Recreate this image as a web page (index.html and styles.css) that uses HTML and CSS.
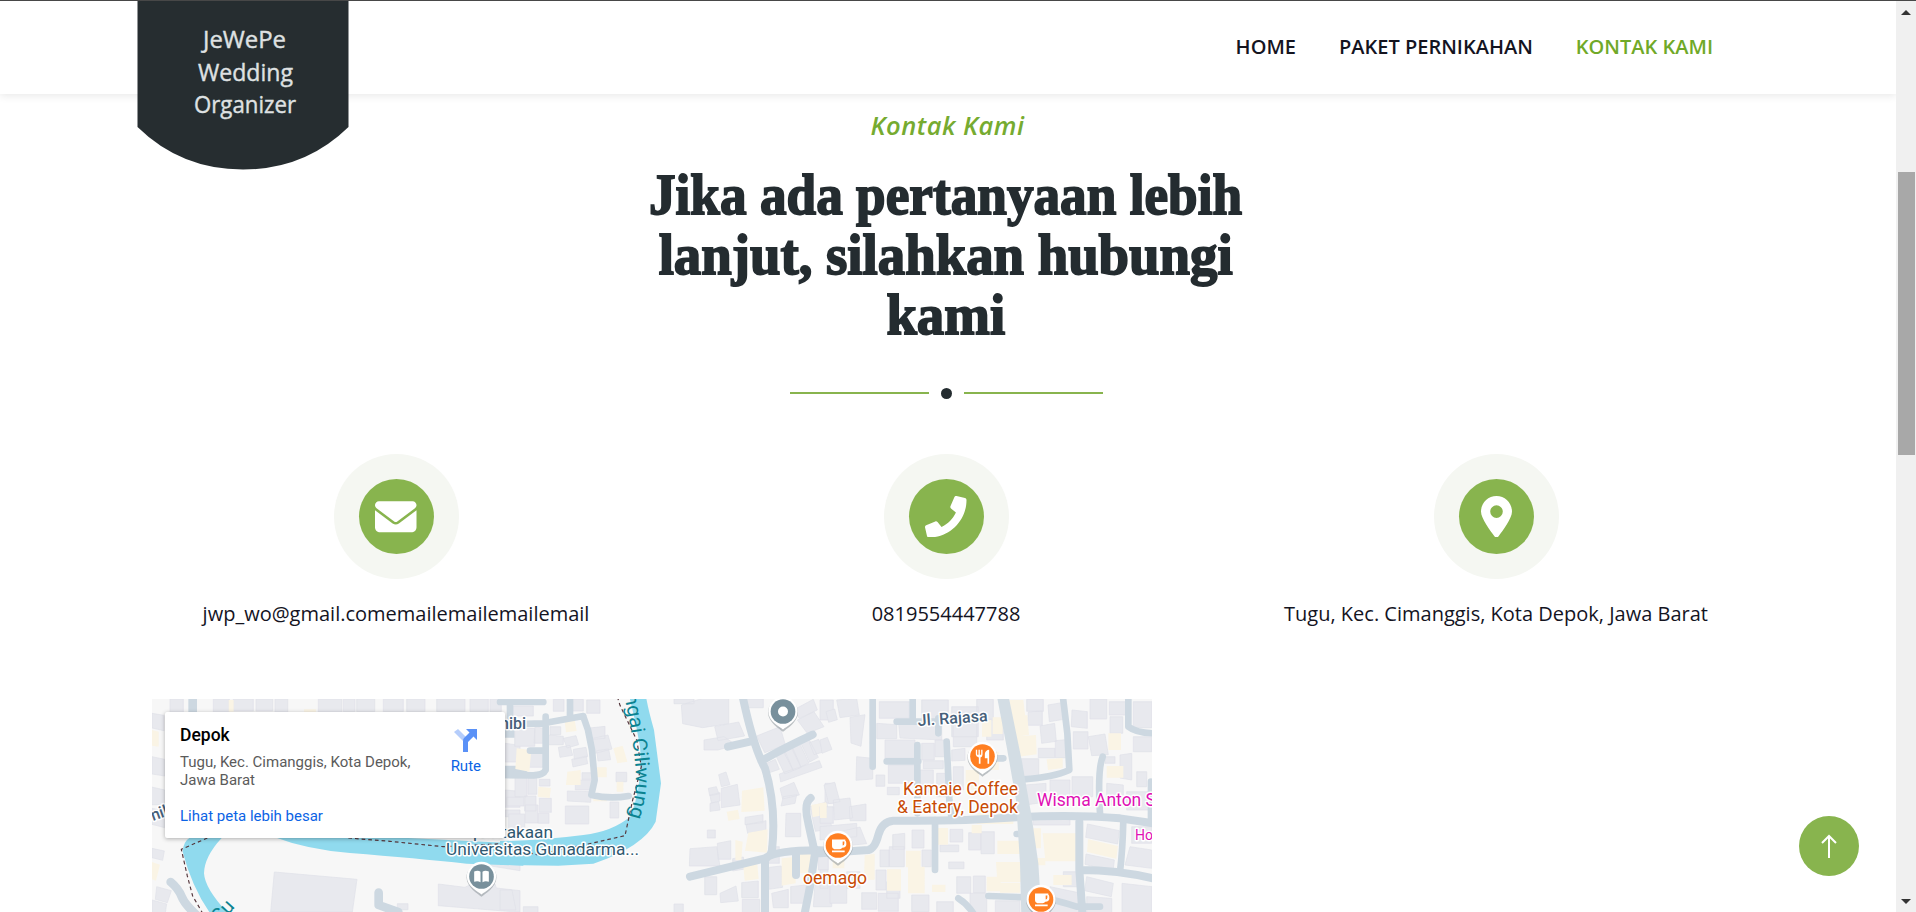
FILE: index.html
```html
<!DOCTYPE html>
<html lang="id">
<head>
<meta charset="utf-8">
<title>JeWePe Wedding Organizer</title>
<link rel="stylesheet" href="styles.css">
</head>
<body>
<div class="page">
  <header class="header">
    <a class="logo">
      <svg width="212" height="170" viewBox="0 0 212 170">
        <path d="M.5 0H211.500V127Q168 169.500 106 169.500T.5 127Z" fill="#262d30"/>
        <g class="logo-text">
          <text x="66" y="48" textLength="83" lengthAdjust="spacingAndGlyphs">JeWePe</text>
          <text x="61" y="81" textLength="95" lengthAdjust="spacingAndGlyphs">Wedding</text>
          <text x="57" y="113" textLength="102" lengthAdjust="spacingAndGlyphs">Organizer</text>
        </g>
      </svg>
    </a>
    <nav class="nav">
      <a>HOME</a>
      <a>PAKET PERNIKAHAN</a>
      <a class="active">KONTAK KAMI</a>
    </nav>
  </header>

  <main class="contact">
    <p class="eyebrow">Kontak Kami</p>
    <h1 class="title"><span class="l1">Jika ada pertanyaan lebih</span><span class="l2">lanjut, silahkan hubungi</span><span class="l3">kami</span></h1>
    <div class="divider"><i class="line"></i><i class="dot"></i><i class="line"></i></div>

    <div class="cards">
      <div class="card">
        <div class="ring"><div class="disc"><svg width="41.500" height="41.500" viewBox="0 0 512 512"><path d="M48 64C21.500 64 0 85.500 0 112c0 15.100 7.100 29.300 19.200 38.400L236.800 313.600c11.400 8.500 27 8.500 38.400 0L492.800 150.400c12.100-9.100 19.200-23.300 19.200-38.400c0-26.500-21.500-48-48-48H48zM0 176V384c0 35.300 28.700 64 64 64H448c35.300 0 64-28.700 64-64V176L294.400 339.200c-22.800 17.100-54 17.100-76.800 0L0 176z"/></svg></div></div>
        <p>jwp_wo@gmail.comemailemailemailemail</p>
      </div>
      <div class="card">
        <div class="ring"><div class="disc"><svg width="41.500" height="41.500" viewBox="0 0 512 512"><path d="M493.400 24.600l-104-24c-11.300-2.600-22.900 3.300-27.500 13.900l-48 112c-4.200 9.800-1.400 21.300 6.900 28l60.600 49.600c-36 76.700-98.900 140.500-177.200 177.200l-49.600-60.600c-6.800-8.300-18.200-11.100-28-6.900l-112 48C3.900 366.500-2 378.100.6 389.400l24 104C27.100 504.200 36.700 512 48 512c256.100 0 464-207.500 464-464 0-11.200-7.700-20.900-18.600-23.400z"/></svg></div></div>
        <p>0819554447788</p>
      </div>
      <div class="card">
        <div class="ring"><div class="disc"><svg width="31" height="41.500" viewBox="0 0 384 512"><path fill-rule="evenodd" d="M215.700 499.200C267 435 384 279.400 384 192C384 86 298 0 192 0S0 86 0 192c0 87.400 117 243 168.300 307.200c12.300 15.300 35.100 15.300 47.400 0zM192 114a78 78 0 1 1 0 156 78 78 0 1 1 0-156z"/></svg></div></div>
        <p>Tugu, Kec. Cimanggis, Kota Depok, Jawa Barat</p>
      </div>
    </div>

    <div class="map">
      <svg class="map-canvas" width="1000" height="213" viewBox="152 699 1000 213">
        <defs>
          <g id="pin"><path d="M0 58C-9 50-45 30-45 0A45 45 0 1 1 45 0C45 30 9 50 0 58Z" fill="#8b9399" opacity=".55" transform="translate(0 3)"/><path d="M0 54C-9 46-44 30-44 0A44 44 0 1 1 44 0C44 30 9 46 0 54Z" fill="#fff"/></g>
          <g id="cup"><use href="#pin"/><circle r="37" fill="#ff7f22"/><path d="M-18-18H22V-14Q25-14 25-3Q25 6 13 7Q10 11 5 11H-11Q-18 10-18 2ZM14-12V0Q19 0 19-6V-12ZM-18 15H20V20H-18Z" fill="#fff" fill-rule="evenodd"/></g>
        </defs>
        <rect x="152" y="699" width="1000" height="213" fill="#f7f7f7"/>

        <!-- west: river bend and campus -->
        <g transform="translate(150 690) scale(.33333)">
          <g class="building">
            <path d="M60 27h40v40h-40zM190 27h48v40h-48zM250 27h60v36h-60zM318 27h50v36h-50zM375 27h38v40h-38zM505 27h70v40h-70zM580 27h35v38h-35zM620 27h54v38h-54zM700 27h60v38h-60zM770 27h55v38h-55zM860 27h85v38h-85zM960 27h55v38h-55zM1020 27h34v38h-34z"/>
            <path d="M6 70l36 6v46l-36-8zM6 200l38 8v50l-38-6zM0 290l44 10v44l-38 0zM6 355l38 8v50l-38-10zM6 475l37 8-5 28-32-8zM20 590l44 12-12 36-36-10zM6 630l44 12-4 26H6z"/>
            <path d="M373 546l248 22-14 98H362zM865 582l80 10 20-10h70l4 12 71 8v65l-245-20zM1015 500l95 20v22l-100-16zM742 641h32v18h-32z"/>
            <path d="M1066 160l44 6v50h-44zM1066 300l44 4v48h-44zM1066 360h44v20h-44z"/>
          </g>
          <path class="yard" d="M6 120l20 5v45l-20-3zM462 58h36v12h-36zM236 30h15v35h-15zM6 516l24 8-12 48-12-4z"/>
          <path class="road" stroke-width="26" d="M128 20V66M62 576Q85 595 95 620T145 680M686 608V645L745 666M1060 130h60M1060 240h60"/>
          <path class="river" d="M118 444H215Q163 500 162 550Q165 600 244 680H188Q128 600 98 485Q100 455 118 444ZM370 440Q470 478 600 489Q800 505 950 521L1120 527V461L1000 455L700 440Z"/>
          <path class="border" d="M172 444L94 478L112 558L128 618L158 670M595 444L720 454L880 470L1120 458"/>
        </g>

        <!-- centre: river, open field, main street -->
        <g transform="translate(500 690) scale(.33333)">
          <path class="building" d="M40 48l60 0v30H40zM44 115h60v54H44zM105 110l25 5v45h-28zM78 190h50v42H78zM45 260h36v60H45zM84 265h26v48H84zM20 322h52v26H20zM74 318h34v45H74zM26 372h48v50H26zM76 345h38v54H76zM118 325h36v42h-36zM118 268h32v20h-32zM115 370h32v30h-32zM196 348h70v54h-70zM202 303l70 2v32l-70-4zM160 28h32v36h-32zM150 110h32v24h-32zM145 135l45 4v25h-45zM175 172l35-6 8 30-38 6zM190 145l38-8 8 27-35 10zM220 178l38-6 5 28-40 8zM215 208l44-10 4 23-44 10zM270 147l54-12 12 42-50 13zM290 182l36-5 6 32-38 4zM246 248h30v20h-30zM226 270h52v30h-52zM348 247h32v28h-32zM330 336h26v48h-26zM260 115l55-6v36l-45 4zM210 28h40v35h-40zM260 30h40v40h-40z"/>
          <path class="building" d="M522 27h60v14h-60zM544 45l64-20 78 0v76l-78 12-60-12zM644 110l72-14 18 42-80 14zM612 150l60-10 36 25-54 15-42 0zM770 138l70-28 16 54-62 24zM730 27h60v26h-60zM625 295l24-5 8 22-28 5zM630 315l30-7v25l-26 6zM630 340l26-5 4 25-30 4zM656 254l22-8 12 38-26 6zM664 295l48-12 8 62-56 8zM570 476l80-6 10 58h-92zM652 460l40-8v56h-38zM622 420h24v24h-24zM735 382l54-8v24l-54 6zM738 404l60-12v30l-55 8zM698 506l32-5 5 36-37 6zM614 560h36v54h-36zM522 642h28v30h-28zM660 610l48-22 7 45-53 5zM725 578l50-5v50h-50zM727 628h52v40h-52zM0 600h36l12 60H0zM70 650h44v20H70z"/>
          <path class="building" d="M800 220l26-12 12 30-30 10zM828 198l28-12 24 56-26 10zM850 184l28-10 26 58-24 10zM875 174l26-10 26 55-25 12zM902 158l26-8 27 52-26 14zM928 158l28-10 14 38-28 8zM838 252l120-40 8 20-124 44zM840 295l42-18 16 38-50 12zM850 320l40-6-5 26-42 8zM858 370h44v70h-46zM892 90l50-25 30 45-50 20zM880 60l60-32 12 32-54 25zM960 30h40v60h-40zM975 280h30v60h-30zM806 470h32v50h-32zM808 532l36-4 4 64-42 6zM815 610l50-12v55h-45zM872 590l45-5v55h-45zM945 580l50 10v60h-55zM955 490h30v50h-30zM930 350l50-14 16 80-50 8z"/>
          <path class="yard" d="M50 175l44 5-6 65-42-8zM194 95l30-5 6 33-32 4zM202 245l40-5v45h-44zM340 175l28-8 14 48-30 5zM290 232h30v30h-30zM115 290l38 4-4 30-36-4zM350 275h20v30h-20zM280 320h40v14h-40zM726 302l64-10 4 70-70 4zM680 365l34-6 5 28-34 5zM745 428l58-10-2 70-66-6zM845 505l42-5v80l-42 7zM898 490h34v60h-34zM730 527l42-5 4 45-42 5zM934 345l44-8 6 35-46 10zM706 450l22 5-4 56h-18z"/>
          <path class="road" stroke-width="20" d="M0 36H130M30 30V100M0 104L130 100L250 78M210 30V75M250 80L264 120L276 180L284 270L274 315Q330 328 386 318M137 80V240Q130 255 100 256L0 255M90 182H130"/>
          <path class="road" stroke-width="24" d="M728 20Q760 170 795 235Q830 350 816 480Q812 500 795 505V680M570 560L795 505Q835 476 1010 482M784 213Q850 175 938 134M684 170L750 155M932 324Q910 340 925 400L945 490L930 590L912 680M888 490V555"/>
          <path class="river" d="M388 20Q408 95 420 170Q430 270 393 378Q338 425 250 435Q120 452 0 453V525L175 527L280 521Q430 470 467 395L483 280L462 120Q445 60 438 20Z"/>
          <path class="border" d="M352 20L360 46L410 150L424 230L398 330L375 437L265 462L110 494L0 465"/>
        </g>

        <!-- east: dense blocks -->
        <g transform="translate(820 690) scale(.33333)">
          <path class="building" d="M50 30l60-5 8 50-58 8zM18 65l26-8 8 32-26 8zM90 82l45-8-12 95-30-10zM0 150l22-8 14 36-30 12zM110 200l48 5v62l-50 4zM12 285l32-8 16 58-34 6zM0 350h40v50H0zM40 330l50-6 8 60-55 6zM88 350l50-8v50H90zM0 410l110-10v40L0 450zM60 425l60-14 20 50-60 6zM178 35h90v50h-90zM170 100l60 4v42h-60zM235 90l130 6v54l-125-6zM195 150h90v55h-90zM205 225h80v55h-80zM168 255h26v34h-26zM202 292h36v22h-36zM305 160h38v50h-38zM310 212h60v24h-60zM300 240h40v66h-40zM350 250h36v70h-36zM345 150h30v50h-30zM395 180l40-5v36l-40 2zM400 230h30v70h-30zM305 30h80v60h-80zM395 50h80v90h-80zM470 28h50v60h-50zM400 100h70v70h-70zM500 90h50v60h-50z"/>
          <path class="building" d="M620 28h50v36h-50zM625 66l42-3v43h-45zM684 45l42-7 6 50-44 7zM756 60l46 5 0 50-48-5zM810 27h50v60h-50zM868 35h52v40h-52zM940 35h56v78h-56zM940 140h56v45h-56zM805 140l50-8 10 62-50 3zM760 125h44v52h-44zM870 80h38v50h-38zM660 108l44-8 5 54-44 6zM706 152l44-4v55h-44zM655 175h50v28h-50zM604 206h52v55h-46zM855 200h30v20h-30zM900 195l35-5v80l-35-6zM690 270h60v60h-60zM614 285l64-5v56l-55 8zM756 260h62v60h-62zM860 280l50 5v60h-50zM920 305h76v55h-76zM950 245h30v45h-30zM640 380h110v25H640zM802 402l96 20-5 40-96-20zM798 492l85 18-4 35-84-22zM930 470l65 10v55l-80-10zM935 410h60v50h-60zM800 560l80 20-6 40-80-18zM800 620l75 5v45h-75zM906 580l90 10v80h-90zM690 590l95 20v70h-95zM730 545h45v45h-45z"/>
          <path class="building" d="M218 434l36-4v48h-36zM276 420h36v54h-36zM390 418h38v38h-38zM446 428h36v52h-36zM483 425h40v66h-40zM360 465h56v20h-56zM386 516h46v20h-46zM180 480h28v50h-28zM208 470h45v60h-45zM306 480h28v50h-28zM168 540h30v60h-30zM200 575h40v50h-40zM460 558h36v50h-36zM410 560h42v50h-42zM30 580h50v60H30zM80 545h40v50H80zM125 608h45v50h-45zM175 610h60v54h-60zM275 615h52v50h-52zM350 635h50v40h-50zM450 610h50v60h-50zM526 632h74v38h-74zM0 540h24v55H0z"/>
          <path class="yard" d="M518 82h30v50h-30zM486 90h28v50h-28zM568 30l42 0 6 50-40 6zM572 80l50-5 5 60-44 6zM584 140l64-5 2 58-58 8zM680 208l48-4v30l-44 6zM865 130l38 0v50h-38zM860 228l50 0v35h-50zM437 240h40v60h-40zM500 185h36v55h-36zM470 370h110v32H470zM635 415h28v60h-28zM668 430h100v84h-92zM804 448l90 20-5 38-88-20zM354 414h30v50h-30zM134 496l30-5v78h-32zM258 482h44v50h-44zM201 538h42v64h-42zM264 530h50v80h-50zM532 452h74v40h-74zM528 516h76v60h-72zM500 560h42v44h-42zM646 504h30v22h-30zM700 555h55v30h-55zM38 490h35v45H38zM336 584h40v22h-40zM540 578h60v30h-60zM0 340h20v44H0zM455 405h30v25h-30z"/>
          <path class="road" stroke-width="20" d="M158 15V230M230 95H350M355 85V130M278 25V90M200 214H295M292 165V370M380 155L388 330L394 380M495 205H550M728 15L742 130L748 240Q700 262 610 268M848 200Q832 240 840 370M925 20V110Q950 130 1005 130M993 275V390M910 390Q908 480 900 545M345 390V540M505 618L620 622M415 625Q440 640 460 670M700 630Q740 640 770 650H840M590 432H620"/>
          <path class="road" stroke-width="24" d="M0 490L145 480Q165 475 175 435T220 392Q400 395 590 382Q760 372 900 385L1000 400M778 395V540L788 680M780 540Q900 540 1010 568"/>
          <path d="M530 15L560 170L588 330L600 520L604 680H665L655 520L635 380L605 210L565 15Z" fill="#d3dde4"/>
        </g>

        <g class="street">
          <text x="500" y="729">nibi</text>
          <text x="153" y="821" transform="rotate(-20 153 821)">nik</text>
          <text x="918" y="726" textLength="70" lengthAdjust="spacingAndGlyphs" transform="rotate(-4 918 726)">Jl. Rajasa</text>
        </g>
        <g class="campus">
          <text x="473" y="838" textLength="80" lengthAdjust="spacingAndGlyphs">pustakaan</text>
          <text x="446" y="855" textLength="193" lengthAdjust="spacingAndGlyphs">Universitas Gunadarma...</text>
        </g>
        <path id="riverline" d="M622 684Q632 730 635 762Q639 792 626 826" fill="none"/>
        <text class="water"><textPath href="#riverline" startOffset="11" textLength="124" lengthAdjust="spacingAndGlyphs">ngai Ciliwung</textPath></text>
        <text class="water" x="220" y="924" transform="rotate(-48 220 924)">Su</text>
        <g class="food">
          <text x="903" y="795" textLength="115" lengthAdjust="spacingAndGlyphs">Kamaie Coffee</text>
          <text x="897" y="812.500" textLength="121" lengthAdjust="spacingAndGlyphs">&amp; Eatery, Depok</text>
          <text x="803" y="884" textLength="64" lengthAdjust="spacingAndGlyphs">oemago</text>
        </g>
        <g class="hotel">
          <text x="1037" y="806" textLength="119" lengthAdjust="spacingAndGlyphs">Wisma Anton S</text>
          <text class="small" x="1135" y="840">Ho</text>
        </g>

        <g transform="translate(481.500 876.500) scale(.33333)"><use href="#pin"/><circle r="37" fill="#78909c"/><path d="M-22-15Q-10-20-3-14V17Q-12 12-22 16ZM22-15Q10-20 3-14V17Q12 12 22 16Z" fill="#fff"/></g>
        <g transform="translate(783 711.500) scale(.33333)"><use href="#pin"/><circle r="37" fill="#78909c"/><circle r="15" fill="#fff"/></g>
        <g transform="translate(982.500 756.500) scale(.33333)"><use href="#pin"/><circle r="37" fill="#ff7f22"/><path d="M-20-20h4v15h4v-15h4v15h4v-15h4V-6Q0 1-6 3V22H-11V3Q-20 0-20-6ZM20-20V22H15V5H7V-8Q9-19 20-20Z" fill="#fff"/></g>
        <use href="#cup" transform="translate(838 845.500) scale(.33333)"/>
        <use href="#cup" transform="translate(1041 899.500) scale(.33333)"/>
      </svg>
      <aside class="place">
        <div class="place-text">
          <strong>Depok</strong>
          <p>Tugu, Kec. Cimanggis, Kota Depok,<br>Jawa Barat</p>
          <a>Lihat peta lebih besar</a>
        </div>
        <div class="route">
          <svg width="24" height="24" viewBox="0 0 24 24"><path d="M4 1L12 9L9 13L0 4Z" fill="#b5cdfb"/><path d="M12 1H23V12L19.500 8.500L14 14V24H9V13Q9 11 10 10L15.500 4.500Z" fill="#5a91f7"/></svg>
          <span>Rute</span>
        </div>
      </aside>
    </div>
  </main>

  <a class="to-top"><svg width="18" height="26" viewBox="0 0 18 26" fill="none" stroke="#fff" stroke-width="2"><path d="M9 25V3M2 10L9 3L16 10"/></svg></a>
</div>
<div class="scrollbar"><i class="up"></i><i class="thumb"></i><i class="down"></i></div>
</body>
</html>
```
FILE: styles.css
```css
* { box-sizing: border-box; }
body { margin: 0; width: 1916px; height: 912px; overflow: hidden; display: flex; background: #fff; border-top: 1px solid #474747; font-family: "Open Sans", sans-serif; }
p, h1 { margin: 0; }
.page { position: relative; width: 1896px; height: 911px; overflow: hidden; }

.header { height: 93px; padding: 0 183px 0 137px; display: flex; justify-content: space-between; align-items: flex-start; box-shadow: 0 2px 8px rgba(0, 0, 0, .09); }
.logo { position: relative; z-index: 2; margin-top: -1px; height: 170px; }
.logo svg { display: block; }
.logo-text { font: 23.500px "Open Sans", sans-serif; fill: #dfe1e2; stroke: #dfe1e2; stroke-width: .4px; }
.nav { display: flex; gap: 43px; padding-top: 31px; font-size: 20px; line-height: 30px; font-weight: 600; color: #14141f; }
.nav .active { color: #70a928; }

.contact { display: flex; flex-direction: column; align-items: center; padding: 12px 126px 0 122px; }
.eyebrow { padding-left: 3px; font-size: 25.500px; line-height: 38px; font-style: italic; font-weight: 600; letter-spacing: .5px; color: #76ab30; }
.title { margin-top: 21px; display: flex; flex-direction: column; align-items: center; font: bold 57px/60px "Liberation Serif", serif; color: #242c30; -webkit-text-stroke: 1.800px #242c30; white-space: nowrap; }
.l1 { transform: scaleX(.934); }
.l2, .l3 { transform: scaleX(.961); }
.divider { margin-top: 42px; height: 12px; display: flex; align-items: center; gap: 12px; }
.line { width: 139px; height: 2px; background: #88b44e; }
.dot { width: 11px; height: 11px; border-radius: 50%; background: #242c30; }
.cards { margin-top: 55px; width: 1650px; display: grid; grid-template-columns: repeat(3, 1fr); }
.card { display: flex; flex-direction: column; align-items: center; font-size: 20px; line-height: 30px; color: #14141f; }
.card p { margin-top: 20px; }
.ring { width: 125px; height: 125px; border-radius: 50%; background: #f5f7f2; display: grid; place-items: center; }
.disc { width: 75px; height: 75px; border-radius: 50%; background: #88b44e; display: grid; place-items: center; }
.disc svg { fill: #fff; }

.map { position: relative; align-self: flex-start; margin: 70px 0 0 30px; width: 1000px; height: 213px; overflow: hidden; }
.map-canvas { display: block; }
.building { fill: #e8e9ee; stroke: #dfe1e8; stroke-width: 2; }
.yard { fill: #faf4e5; }
.road { fill: none; stroke: #cdd8e1; stroke-linecap: round; stroke-linejoin: round; }
.river { fill: #90daee; }
.border { fill: none; stroke: #55363c; stroke-width: 3.500; stroke-dasharray: 11 9; }
.map text { font-family: Roboto, sans-serif; paint-order: stroke; stroke: #fff; stroke-width: 3px; stroke-linejoin: round; }
.street { font-size: 16px; font-weight: 500; fill: #46607a; }
.campus { font-size: 16.500px; fill: #2f5870; }
.map .water { font-size: 20px; fill: #0b8391; stroke: none; }
.food { font-size: 17.500px; fill: #c84b05; }
.hotel { font-size: 17.500px; fill: #e010b4; }
.hotel .small { font-size: 14px; }
.place { position: absolute; left: 13px; top: 13px; width: 340px; height: 126px; padding: 12px 24px 0 15px; display: flex; justify-content: space-between; background: #fff; border-radius: 2px; box-shadow: 0 1px 4px rgba(0, 0, 0, .3); font: 15px/18px Roboto, sans-serif; color: #5b5b5b; }
.place strong { display: block; font-size: 17.500px; line-height: 22px; font-weight: 500; color: #000; }
.place p { margin: 7px 0 18px; }
.place a, .route { color: #0b63e5; }
.route { display: flex; flex-direction: column; align-items: center; padding-top: 4px; gap: 5px; }

.to-top { position: absolute; left: 1799px; top: 815px; width: 60px; height: 60px; border-radius: 50%; background: #88b44e; display: grid; place-items: center; }
.scrollbar { width: 20px; height: 911px; background: #f0f0f0; display: flex; flex-direction: column; align-items: center; padding: 9px 0 8px; }
.up, .down { width: 0; height: 0; border: 5px solid transparent; }
.up { border-top: 0; border-bottom-color: #333; }
.down { border-bottom: 0; border-top-color: #333; margin-top: auto; }
.thumb { width: 17px; height: 283px; margin-top: 157px; background: #a8a8a8; }
```
